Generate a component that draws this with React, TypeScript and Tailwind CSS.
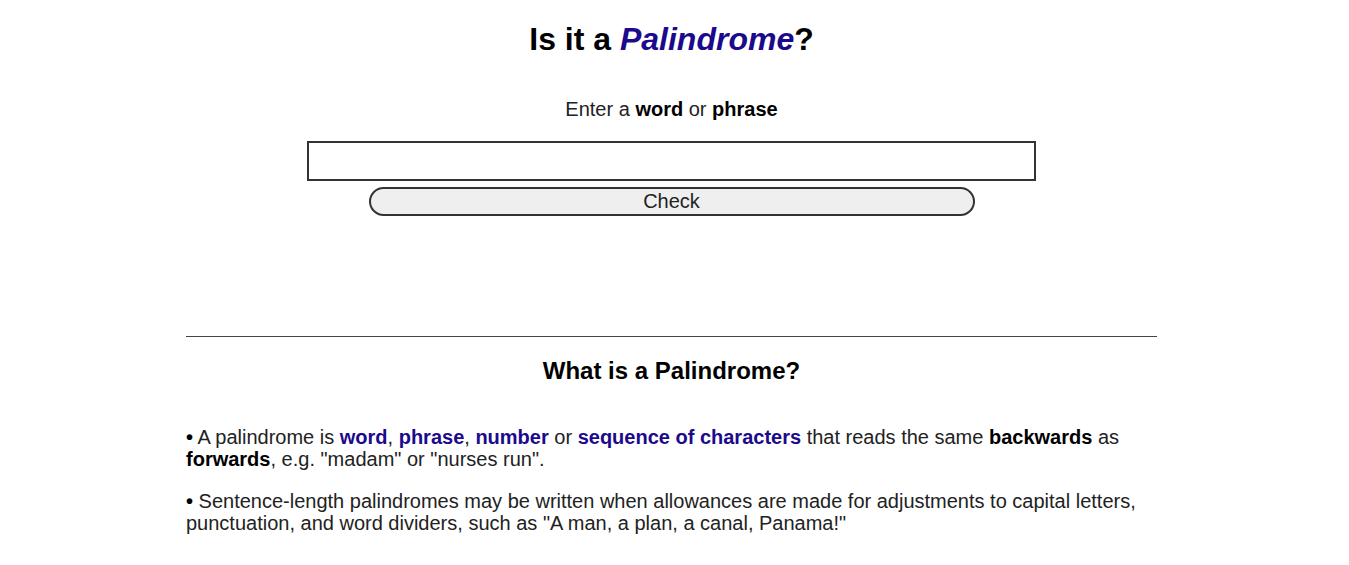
import { useState } from "react"

const blue = "text-[#1b0a8c]"

export default function App() {
  const [text, setText] = useState("")

  return (
    <div className="w-[1343px] bg-white text-[#222] font-['Liberation_Sans',Arial,sans-serif]">
      <h1 className="pt-[21px] text-center text-[32px] leading-[36px] font-bold text-black">
        Is it a <i className={blue}>Palindrome</i>?
      </h1>

      <p className="mt-[41px] text-center text-[20px] leading-[22px]">
        Enter a <b className="text-black">word</b> or <b className="text-black">phrase</b>
      </p>

      <div className="mt-[21px] flex flex-col items-center gap-[6px]">
        <input
          value={text}
          onChange={(e) => setText(e.target.value)}
          className="w-[729px] h-[40px] border-2 border-[#333] bg-white px-2 text-[20px] outline-none"
        />
        <button className="w-[606px] h-[29px] rounded-full border-2 border-[#333] bg-[#efefef] pb-[2px] text-[20px] leading-none text-[#222]">
          Check
        </button>
      </div>

      <div className="mx-auto mt-[120px] w-[971px]">
        <hr className="border-0 border-t border-[#444]" />
        <h2 className="mt-[21px] text-center text-[24px] leading-[26px] font-bold text-black">
          What is a Palindrome?
        </h2>

        <div className="mt-[42px] text-[20px] leading-[22px]">
          <p>
            <b className="text-black">•</b> A palindrome is <b className={blue}>word</b>,{" "}
            <b className={blue}>phrase</b>, <b className={blue}>number</b> or{" "}
            <b className={blue}>sequence of characters</b> that reads the same{" "}
            <b className="text-black">backwards</b> as <b className="text-black">forwards</b>, e.g.
            "madam" or "nurses run".
          </p>
          <p className="mt-[20px]">
            <b className="text-black">•</b> Sentence-length palindromes may be written when allowances
            are made for adjustments to capital letters, punctuation, and word dividers, such as "A
            man, a plan, a canal, Panama!"
          </p>
        </div>
      </div>
    </div>
  )
}
